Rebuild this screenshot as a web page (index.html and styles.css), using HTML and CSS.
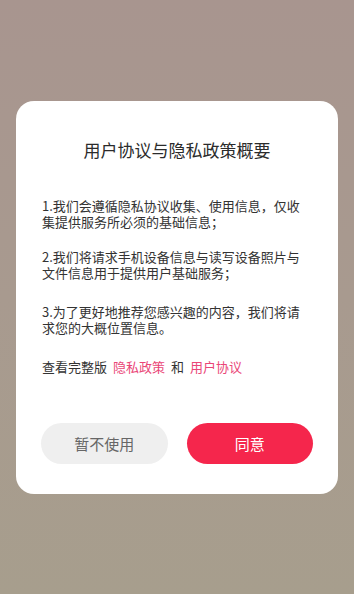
FILE: index.html
```html
<!DOCTYPE html>
<html lang="zh-CN">
<head>
    <meta charset="UTF-8">
    <meta name="viewport" content="width=device-width, initial-scale=1.0">
    <title>用户协议与隐私政策概要</title>
    <link rel="stylesheet" href="styles.css">
</head>
<body>
    <div class="dialog">
        <h1 class="dialog-title">用户协议与隐私政策概要</h1>
        <div class="dialog-body">
            <p class="item">1.我们会遵循隐私协议收集、使用信息，仅收集提供服务所必须的基础信息；</p>
            <p class="item">2.我们将请求手机设备信息与读写设备照片与文件信息用于提供用户基础服务；</p>
            <p class="item">3.为了更好地推荐您感兴趣的内容，我们将请求您的大概位置信息。</p>
            <p class="item">查看完整版<a class="link" href="#">隐私政策</a>和<a class="link" href="#">用户协议</a></p>
        </div>
        <div class="dialog-actions">
            <button class="btn btn-cancel">暂不使用</button>
            <button class="btn btn-ok">同意</button>
        </div>
    </div>
</body>
</html>
```

FILE: styles.css
```css
* {
    margin: 0;
    padding: 0;
    box-sizing: border-box;
    font-family: "Noto Sans CJK SC", "Noto Sans", sans-serif;
}
body {
    min-height: 100vh;
    display: flex;
    align-items: center;
    justify-content: center;
    background: linear-gradient(180deg, #a8958f 0%, #a89a8f 50%, #a79e8d 100%);
}
.dialog {
    width: 322px;
    background: #fff;
    border-radius: 18px;
    padding: 36px 0 30px;
}
.dialog-title {
    font-size: 17px;
    font-weight: normal;
    line-height: 26px;
    color: #2b2b2b;
    text-align: center;
}
.dialog-body {
    margin-top: 35px;
    padding: 0 30px 0 26px;
}
.item {
    font-size: 13px;
    line-height: 16px;
    color: #333;
    margin-bottom: 23px;
}
.item:first-child {
    margin-bottom: 19px;
}
.item:last-child {
    margin-bottom: 0;
}
.link {
    color: #ea4677;
    text-decoration: none;
    padding: 0 6px;
}
.dialog-actions {
    display: flex;
    gap: 19px;
    padding: 0 25px;
    margin-top: 48px;
}
.btn {
    flex: 1;
    height: 41px;
    border: none;
    border-radius: 21px;
    font-size: 15px;
    cursor: pointer;
}
.btn-cancel {
    background: #efefef;
    color: #666;
}
.btn-ok {
    background: #f5264c;
    color: #fff;
}
```
